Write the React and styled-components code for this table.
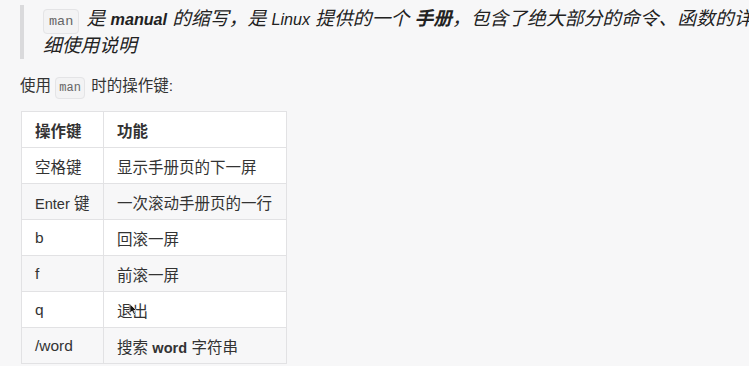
import React from 'react'
import styled, { createGlobalStyle } from 'styled-components'

const GlobalStyle = createGlobalStyle`
  html, body {
    margin: 0;
    padding: 0;
    background: #f7f7f8;
    overflow: hidden;
  }
  body {
    font-family: "Liberation Sans", "Noto Sans CJK SC", sans-serif;
    color: #333;
  }
`

const Page = styled.div`
  padding: 5px 0 0 20px;
`

// latin words run narrower than the CJK glyphs around them
const Latin = styled.span`
  font-size: ${p => p.$size || '0.86em'};
  line-height: 1;
`

const Quote = styled.blockquote`
  margin: 0;
  padding-left: 19px;
  border-left: 4px solid #dadadc;
  font-size: 18.8px;
  font-style: italic;
  color: #222;
  white-space: nowrap;
`

const QuoteLine = styled.div`
  height: 27px;
  line-height: 27px;
`

const Code = styled.code`
  font-family: "Liberation Mono", monospace;
  font-style: normal;
  font-size: ${p => (p.$big ? '13.5px' : '12px')};
  line-height: 1;
  color: #666;
  background: #f3f3f4;
  border: 1px solid #e4e4e6;
  border-radius: 4px;
  padding: ${p => (p.$big ? '4px 5px' : '3px 3px')};
  margin-right: 2px;
`

const Para = styled.p`
  margin: 15px 0 0;
  height: 24px;
  font-size: 15.5px;
  line-height: 24px;
  color: #333;
`

const Table = styled.table`
  margin-top: 13px;
  margin-left: 1px;
  border-collapse: collapse;
  table-layout: fixed;
  width: 265px;
  font-size: 15.5px;
  color: #333;
`

const Th = styled.th`
  height: 35px;
  padding: 0 13px;
  text-align: left;
  font-weight: bold;
  background: #fff;
  border: 1px solid #e2e2e4;
`

const Row = styled.tr`
  background: ${p => (p.$alt ? '#f7f7f8' : '#fff')};
`

const Td = styled.td`
  position: relative;
  height: 35px;
  padding: 0 13px;
  border: 1px solid #e2e2e4;
  white-space: nowrap;
`

const Cursor = styled.svg`
  position: absolute;
  left: 25px;
  top: 11px;
`

const rows = [
  ['空格键', '显示手册页的下一屏'],
  [<><Latin $size="0.94em">Enter</Latin> 键</>, '一次滚动手册页的一行'],
  [<Latin $size="1em">b</Latin>, '回滚一屏'],
  [<Latin $size="1em">f</Latin>, '前滚一屏'],
  [<Latin $size="1em">q</Latin>, '退出'],
  [<Latin $size="1em">/word</Latin>, <>搜索 <Latin as="b" $size="0.94em">word</Latin> 字符串</>],
]

function App() {
  return (
    <Page>
      <GlobalStyle />
      <Quote>
        <QuoteLine>
          <Code $big>man</Code> 是 <Latin as="b">manual</Latin> 的缩写，是 <Latin>Linux</Latin> 提供的一个 <b>手册</b>，包含了绝大部分的命令、函数的详
        </QuoteLine>
        <QuoteLine>细使用说明</QuoteLine>
      </Quote>

      <Para>
        使用 <Code>man</Code> 时的操作键:
      </Para>

      <Table>
        <colgroup>
          <col style={{ width: 82 }} />
          <col style={{ width: 183 }} />
        </colgroup>
        <thead>
          <tr>
            <Th>操作键</Th>
            <Th>功能</Th>
          </tr>
        </thead>
        <tbody>
          {rows.map((r, i) => (
            <Row key={i} $alt={i % 2 === 1}>
              <Td>{r[0]}</Td>
              <Td>
                {r[1]}
                {i === 4 && (
                  <Cursor viewBox="0 0 10 14" width="9" height="13">
                    <path d="M1 1 L1 11 L3.5 8.8 L5.6 13 L7.3 12.2 L5.3 8.1 L8.6 8.1 Z" fill="#111" stroke="#fff" strokeWidth="0.8" />
                  </Cursor>
                )}
              </Td>
            </Row>
          ))}
        </tbody>
      </Table>
    </Page>
  )
}

export default App
